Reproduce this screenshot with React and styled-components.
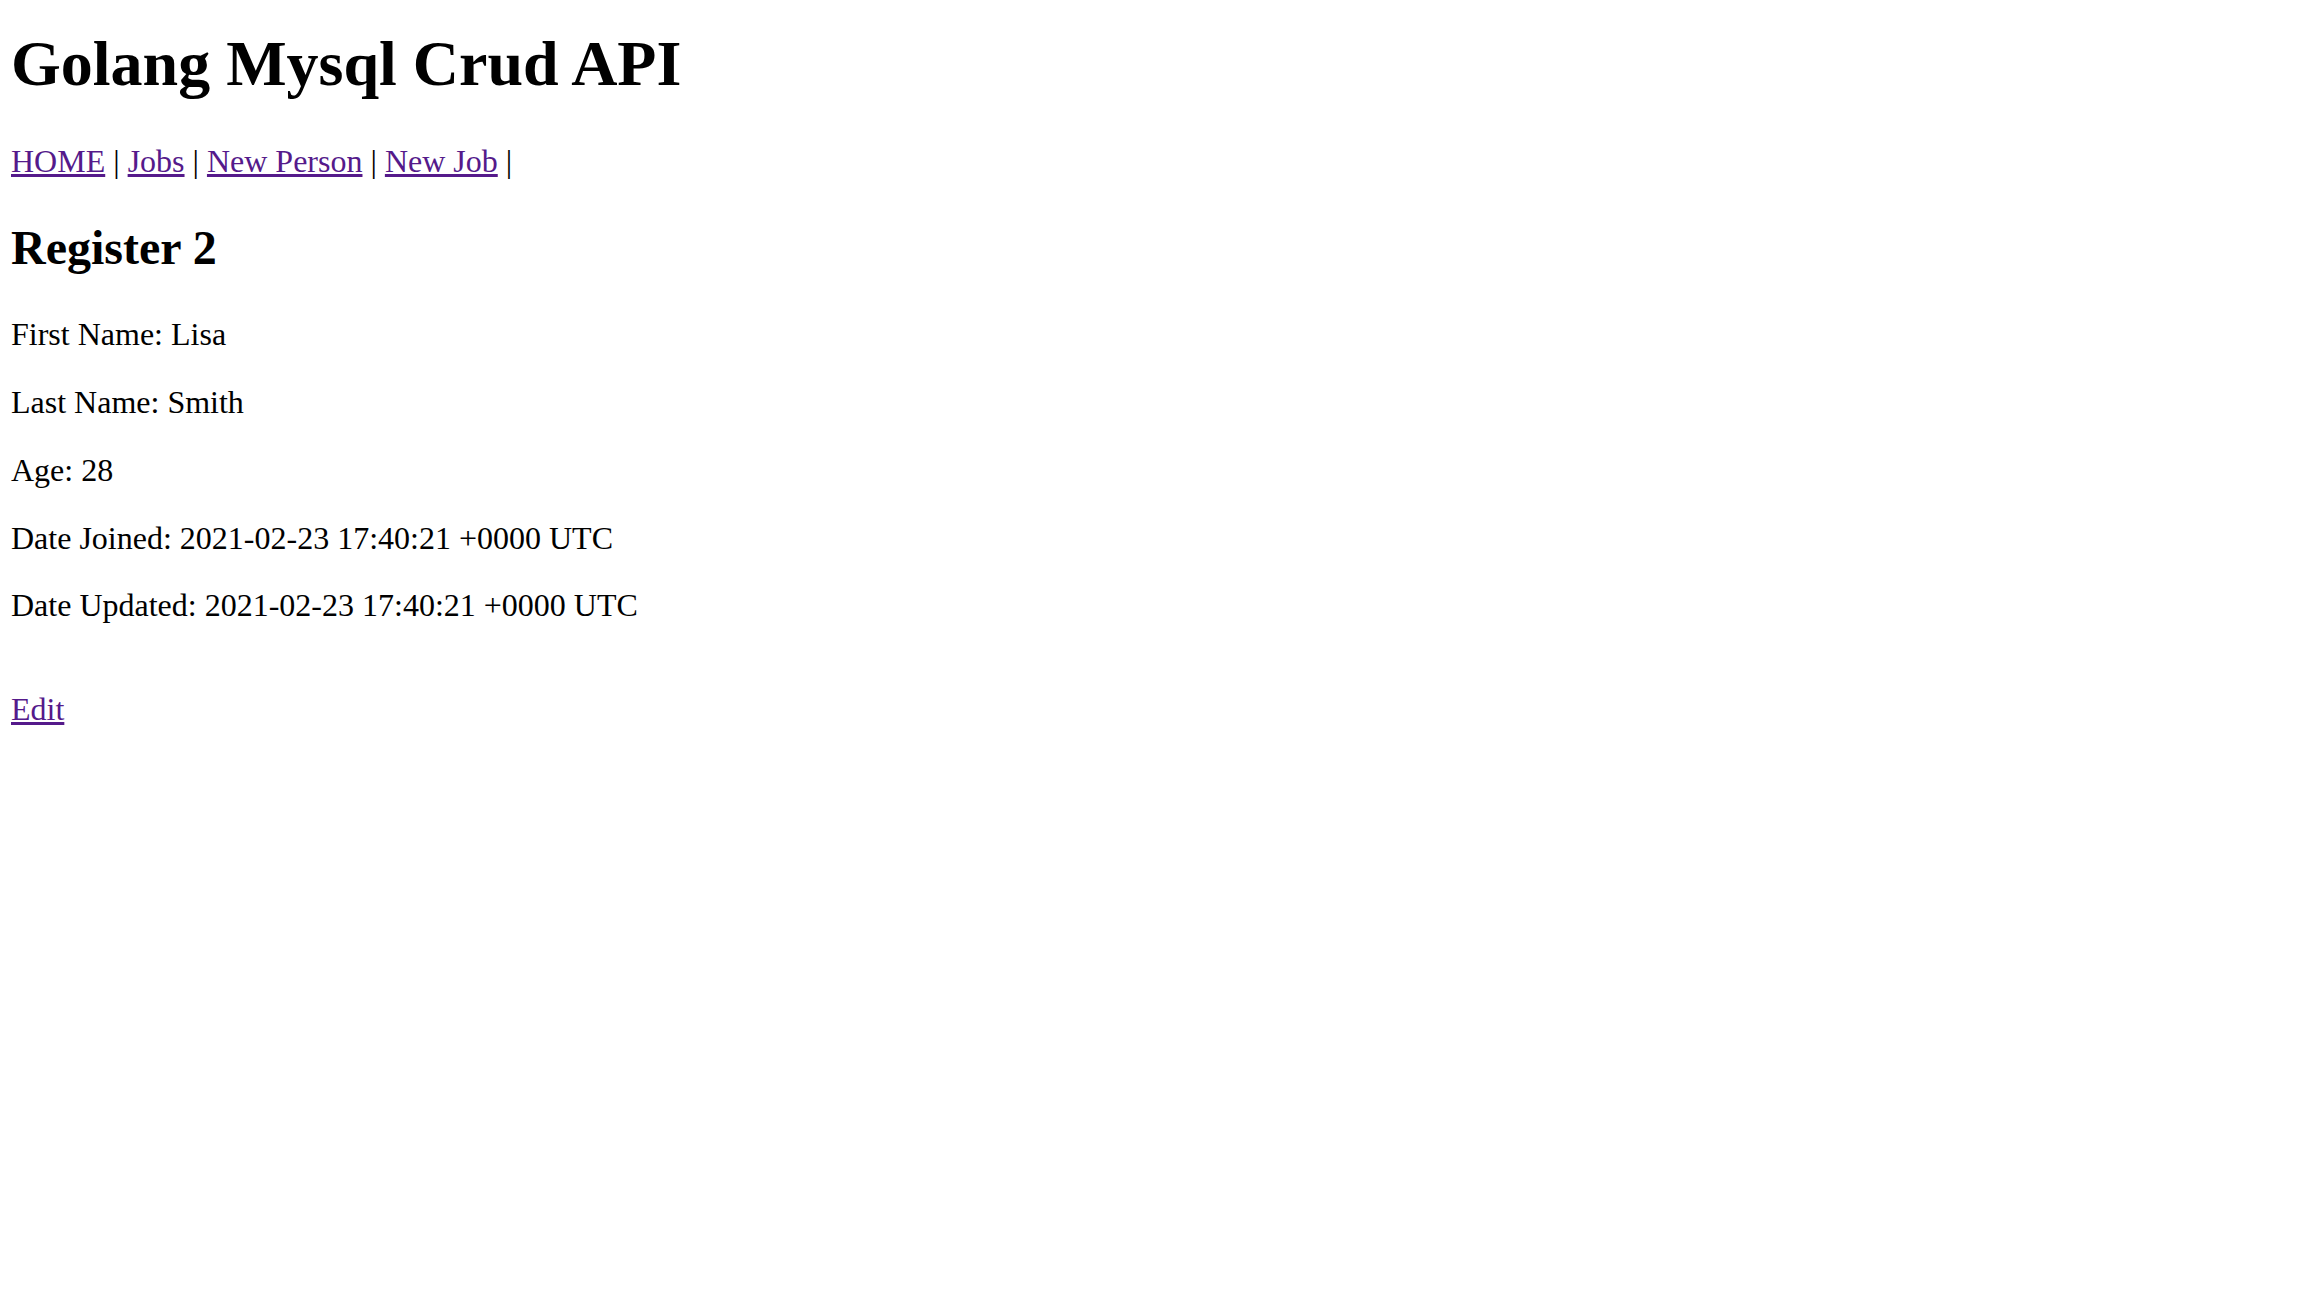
import React from 'react';
import styled, { createGlobalStyle } from 'styled-components';

const GlobalStyle = createGlobalStyle`
  html, body {
    margin: 0;
    background: #ffffff;
  }
  body {
    font-family: "Liberation Serif", "Times New Roman", serif;
    color: #000000;
  }
`;

const Page = styled.div`
  padding: 1px 11px 0;
  font-size: 32px;
  line-height: 1.117;
`;

const Title = styled.h1`
  font-size: 64px;
  font-weight: bold;
  line-height: 1.149;
  margin: 26px 0 43px;
`;

const Nav = styled.p`
  margin: 0;
`;

const NavLink = styled.a`
  color: #551a8b;
  text-decoration: underline;
`;

const Heading = styled.h2`
  font-size: 48px;
  font-weight: bold;
  line-height: 1.149;
  margin: 41px 0 42px;
`;

const Field = styled.p`
  margin: 32px 0;
`;

const links = ['HOME', 'Jobs', 'New Person', 'New Job'];

const person = [
  ['First Name', 'Lisa'],
  ['Last Name', 'Smith'],
  ['Age', '28'],
  ['Date Joined', '2021-02-23 17:40:21 +0000 UTC'],
  ['Date Updated', '2021-02-23 17:40:21 +0000 UTC'],
];

export default function App() {
  return (
    <>
      <GlobalStyle />
      <Page>
        <Title>Golang Mysql Crud API</Title>
        <Nav>
          {links.map((l) => (
            <React.Fragment key={l}>
              <NavLink href="#">{l}</NavLink> |{' '}
            </React.Fragment>
          ))}
        </Nav>
        <Heading>Register 2</Heading>
        {person.map(([k, v]) => (
          <Field key={k}>
            {k}: {v}
          </Field>
        ))}
        <br />
        <NavLink href="#">Edit</NavLink>
      </Page>
    </>
  );
}
